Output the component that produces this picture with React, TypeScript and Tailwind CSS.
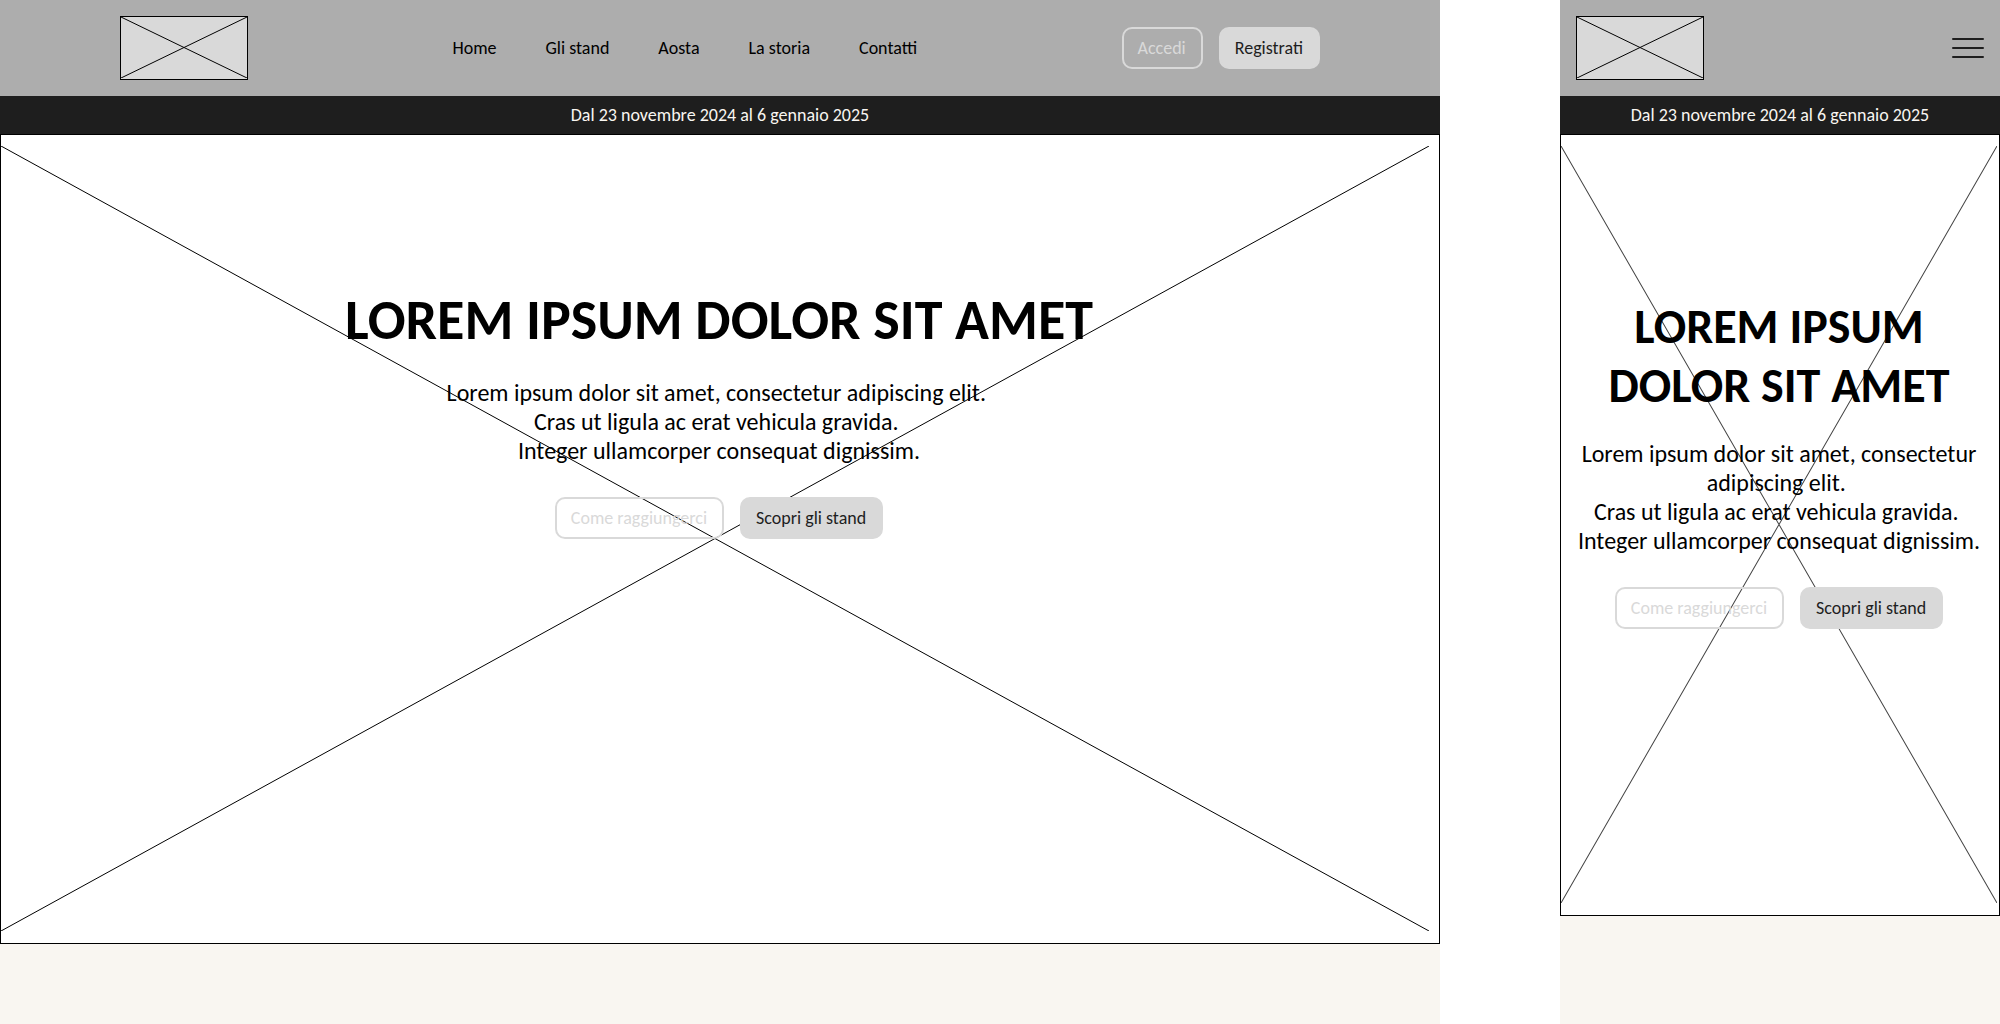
import React from "react";
import clsx from "clsx";

const links = ["Home", "Gli stand", "Aosta", "La storia", "Contatti"];

const Cross: React.FC<{ color?: string }> = ({ color = "black" }) => (
    <svg className="block size-full" viewBox="0 0 100 100" preserveAspectRatio="none" aria-hidden="true">
        <path d="M0 0L100 100M0 100L100 0" stroke={color} strokeWidth="1" vectorEffect="non-scaling-stroke" fill="none" />
    </svg>
);

const Logo: React.FC = () => (
    <div className="w-32 h-16 shrink-0 border border-black bg-[#d9d9d9] pb-px">
        <Cross />
    </div>
);

const Button: React.FC<{ outline?: boolean; children: React.ReactNode }> = ({ outline, children }) => (
    <button
        type="button"
        className={clsx(
            "rounded-[10px] border-2 border-[#d9d9d9] pl-3.5 pr-[15px] py-2 text-[18px] leading-[22px] whitespace-nowrap",
            outline ? "text-[#d9d9d9]" : "bg-[#d9d9d9] text-[#1e1e1e]"
        )}
    >
        {children}
    </button>
);

const DateBar: React.FC = () => (
    <p className="bg-[#1e1e1e] py-2 text-center text-[18px] leading-[22px] text-[#f9f6f1]">
        Dal 23 novembre 2024 al 6 gennaio 2025
    </p>
);

const HeroText: React.FC = () => (
    <>
        <p className="mt-6 text-[24px] leading-[29px]">
            Lorem ipsum dolor sit amet, consectetur adipiscing elit.&nbsp;
            <br />
            Cras ut ligula ac erat vehicula gravida.&nbsp;
            <br />
            Integer ullamcorper consequat dignissim.
        </p>
        <div className="mt-8 flex justify-center gap-4">
            <Button outline>Come raggiungerci</Button>
            <Button>Scopri gli stand</Button>
        </div>
    </>
);

const Desktop: React.FC = () => (
    <div className="flex flex-col bg-[#f9f6f1]">
        <header className="flex items-center justify-between bg-[#adadad] px-[120px] py-4">
            <Logo />
            <nav className="flex gap-[49px] text-[18px] leading-[22px]">
                {links.map((link) => (
                    <a key={link} href="#">
                        {link}
                    </a>
                ))}
            </nav>
            <div className="flex gap-4">
                <Button outline>Accedi</Button>
                <Button>Registrati</Button>
            </div>
        </header>
        <DateBar />
        <section className="relative min-h-[810px] border border-black bg-white pt-[151px] text-center">
            <div className="absolute top-[11px] right-2.5 bottom-3 left-0">
                <Cross />
            </div>
            <div className="relative pr-0.5">
                <h1 className="text-[56px] leading-[68px] font-bold">LOREM IPSUM DOLOR SIT AMET</h1>
                <HeroText />
            </div>
        </section>
    </div>
);

const Mobile: React.FC = () => (
    <div className="flex flex-col bg-[#f9f6f1]">
        <header className="flex items-center justify-between bg-[#adadad] p-4">
            <Logo />
            <button type="button" aria-label="Menu">
                <svg className="block w-8 h-8" viewBox="0 0 32 32" aria-hidden="true">
                    <path d="M1 7H31M1 16H31M1 25H31" stroke="#1e1e1e" strokeWidth="2" strokeLinecap="round" />
                </svg>
            </button>
        </header>
        <DateBar />
        <section className="relative min-h-[782px] border border-black bg-white px-3 pt-[162px] text-center">
            <div className="absolute top-[11px] right-0.5 bottom-3 left-0">
                <Cross color="#444444" />
            </div>
            <div className="relative pr-0.5">
                <h1 className="text-[48px] leading-[59px] font-bold">LOREM IPSUM DOLOR SIT AMET</h1>
                <HeroText />
            </div>
        </section>
    </div>
);

const App: React.FC = () => {
    return (
        <div className="grid h-screen grid-cols-[72fr_22fr] gap-x-[6%] overflow-hidden bg-white font-['Carlito','Lato',sans-serif] text-black">
            <Desktop />
            <Mobile />
        </div>
    );
};

export default App;
